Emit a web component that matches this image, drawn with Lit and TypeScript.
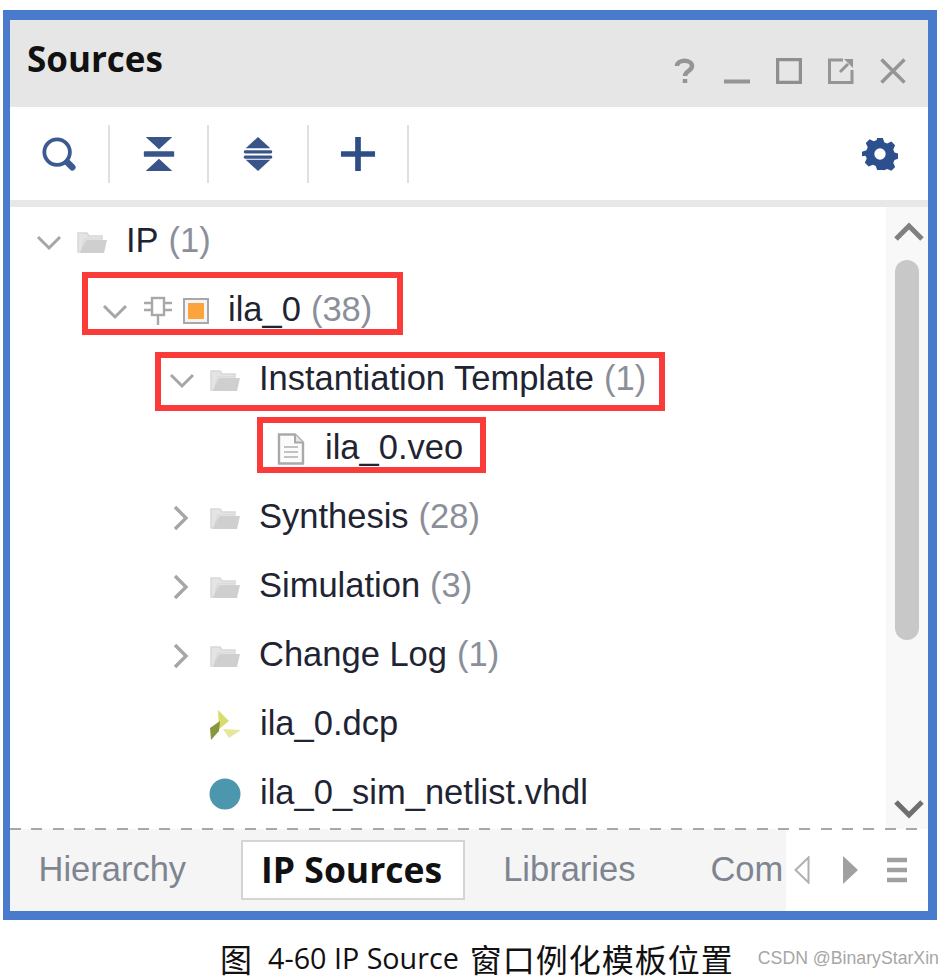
import { LitElement, html, css, svg } from 'lit';
import { customElement } from 'lit/decorators.js';

type Row = {
  indent: number;
  chevron?: 'down' | 'right';
  icon: 'folder' | 'chip' | 'file' | 'dcp' | 'dot';
  name: string;
  count?: string;
};

const ROWS: Row[] = [
  { indent: 26, chevron: 'down', icon: 'folder', name: 'IP', count: '(1)' },
  { indent: 92, chevron: 'down', icon: 'chip', name: 'ila_0', count: '(38)' },
  { indent: 159, chevron: 'down', icon: 'folder', name: 'Instantiation Template', count: '(1)' },
  { indent: 267, icon: 'file', name: 'ila_0.veo' },
  { indent: 159, chevron: 'right', icon: 'folder', name: 'Synthesis', count: '(28)' },
  { indent: 159, chevron: 'right', icon: 'folder', name: 'Simulation', count: '(3)' },
  { indent: 159, chevron: 'right', icon: 'folder', name: 'Change Log', count: '(1)' },
  { indent: 199, icon: 'dcp', name: 'ila_0.dcp' },
  { indent: 199, icon: 'dot', name: 'ila_0_sim_netlist.vhdl' },
];

const folderIcon = svg`<svg class="ic folder" viewBox="0 0 30 24">
  <path d="M1 22V3h9l2 3h13v3H8L4 22z" fill="#e4e4e4" stroke="#d8d8d8" stroke-width="1.5"/>
  <path d="M9 10h21l-3 13H3z" fill="#cfcfcf"/>
</svg>`;

const chipIcon = svg`<svg class="ic chip" viewBox="0 0 30 30">
  <rect x="9" y="2" width="12" height="17" fill="#fff" stroke="#a8a8a8" stroke-width="2.4"/>
  <path d="M1 7h8M1 14h8M21 7h8M21 14h8M15 19v10" stroke="#a8a8a8" stroke-width="2.4" fill="none"/>
</svg>
<svg class="ic square" viewBox="0 0 26 26">
  <rect x="1" y="1" width="24" height="24" fill="#f4f4f4" stroke="#a8a8a8" stroke-width="2"/>
  <rect x="5" y="5" width="16" height="16" fill="#fba43c"/>
</svg>`;

const fileIcon = svg`<svg class="ic file" viewBox="0 0 28 32">
  <path d="M2 1.500h16l8 8V30.500H2z" fill="#fbfbfb" stroke="#a9a9a9" stroke-width="2.400"/>
  <path d="M18 1.500v8h8" fill="#e6e6e6" stroke="#a9a9a9" stroke-width="2"/>
  <path d="M7 14h14M7 19h14M7 24h14" stroke="#c2c2c2" stroke-width="2"/>
</svg>`;

const dcpIcon = svg`<svg class="ic dcp" viewBox="0 0 32 32">
  <path d="M9 1l11 11-10 8z" fill="#d9dc6a"/>
  <path d="M1 19l10-7-1 10-8 9z" fill="#87973c"/>
  <path d="M14 20l18 1-12 8z" fill="#e4e89b"/>
</svg>`;

const dotIcon = svg`<svg class="ic dot" viewBox="0 0 32 32"><circle cx="16" cy="16" r="15.500" fill="#4c97ae"/></svg>`;

const ICONS = { folder: folderIcon, chip: chipIcon, file: fileIcon, dcp: dcpIcon, dot: dotIcon };

const CHEVRONS = {
  down: svg`<svg class="chev" viewBox="0 0 26 26"><path d="M2 8l11 11L24 8" fill="none" stroke="#a6a6a6" stroke-width="3"/></svg>`,
  right: svg`<svg class="chev" viewBox="0 0 26 26"><path d="M6 2l11 11L6 24" fill="none" stroke="#a6a6a6" stroke-width="3.400"/></svg>`,
};

@customElement('app-root')
export class AppRoot extends LitElement {
  static override styles = css`
    :host {
      display: block;
      position: relative;
      width: 951px;
      height: 978px;
      padding: 10px 0 0 3px;
      box-sizing: border-box;
      background: #fff;
      font-family: 'Liberation Sans', Arial, sans-serif;
      overflow: hidden;
    }
    .frame {
      width: 934px;
      height: 910px;
      box-sizing: border-box;
      border: solid #4a7acb;
      border-width: 10px 9px 9px 7px;
      display: flex;
      flex-direction: column;
    }

    .title {
      height: 87px;
      flex: none;
      background: #e6e6e6;
      display: flex;
      padding: 0 22px 0 17px;
    }
    .title h1 {
      margin: 18px 0 0;
      font: 700 35px/42px 'Open Sans', sans-serif;
      color: #111;
    }
    .win {
      margin-left: auto;
      display: flex;
      gap: 26px;
      padding-top: 38px;
    }
    .win svg { width: 26px; height: 26px; display: block; }

    .tools {
      height: 93px;
      flex: none;
      background: #fff;
      border-bottom: 7px solid #e8e8e8;
      box-sizing: content-box;
      display: flex;
      align-items: center;
      padding-right: 30px;
    }
    .tool {
      width: 97.700px;
      height: 58px;
      border-right: 2px solid #e0e0e0;
      display: flex;
      align-items: center;
      justify-content: center;
      flex: none;
    }
    .tool svg { width: 36px; height: 36px; display: block; }
    .gear { margin-left: auto; width: 36px; height: 36px; display: block; }

    .body {
      flex: 1;
      min-height: 0;
      display: flex;
    }
    .tree {
      flex: 1;
      min-width: 0;
    }
    .row {
      height: 69px;
      display: flex;
      align-items: center;
      font-size: 34.500px;
      color: #1f2433;
      white-space: nowrap;
    }
    .chev { width: 26px; height: 26px; margin-right: 15px; flex: none; display: block; }
    .ic { display: block; flex: none; }
    .folder { width: 30px; height: 24px; }
    .chip { width: 30px; height: 30px; }
    .square { width: 26px; height: 26px; margin-left: 10px; }
    .file { width: 28px; height: 32px; margin-right: 1px; }
    .dcp, .dot { width: 32px; height: 32px; }
    .name { margin-left: 19px; padding-bottom: 2px; }
    .count { margin-left: 10px; padding-bottom: 2px; color: #8b8f99; }

    .scroll {
      width: 42px;
      flex: none;
      background: #f8f8f8;
      display: flex;
      flex-direction: column;
      align-items: center;
    }
    .scroll svg { width: 30px; height: 20px; flex: none; display: block; margin-left: 3px; }
    .up { margin-top: 14px; }
    .thumb {
      width: 24px;
      height: 380px;
      margin-top: 19px;
      border-radius: 12px;
      background: #c8c8c8;
    }
    .down { margin-top: 160px; }

    .tabs {
      height: 82px;
      flex: none;
      display: flex;
      background: #fff;
      position: relative;
    }
    .tabs::before {
      content: '';
      position: absolute;
      left: 0;
      right: 11px;
      top: -1px;
      height: 2px;
      background: repeating-linear-gradient(90deg, #a8a8a8 0 11px, transparent 11px 21.330px);
    }
    .strip {
      width: 776px;
      flex: none;
      background: #f5f5f5;
      overflow: hidden;
      display: flex;
      align-items: center;
      padding: 0 0 2px 28.500px;
      box-sizing: border-box;
      font-size: 34.500px;
      color: #7f8590;
      white-space: nowrap;
    }
    .tab.active {
      flex: none;
      margin: 2px 38px 0 55px;
      width: 224px;
      height: 60px;
      box-sizing: border-box;
      border: 2px solid #d4d4d4;
      padding-right: 3px;
      background: #fff;
      color: #111;
      font: 700 35.500px/54px 'Open Sans', sans-serif;
      text-align: center;
    }
    .libs { margin-right: 75px; }
    .nav {
      flex: 1;
      display: flex;
      align-items: center;
      padding-left: 8px;
    }
    .nav svg { display: block; flex: none; }
    .next { margin-left: 33px; }
    .menu { margin-left: 28px; }

    .caption {
      height: 76px;
      display: flex;
      align-items: center;
      padding-left: 217px;
      font: 29px/36px 'Open Sans', 'Noto Sans CJK SC', sans-serif;
      color: #111;
      white-space: nowrap;
    }
    .cjk {
      font-family: 'Noto Sans CJK SC', sans-serif;
      font-size: 32px;
      line-height: 36px;
      letter-spacing: 1px;
    }
    .latin { margin: 0 11px 0 15px; font-size: 28.700px; }
    .mark {
      margin-left: 24px;
      font: 17.700px/24px 'Liberation Sans', sans-serif;
      color: #a6a6a6;
    }

    .box {
      position: absolute;
      box-sizing: border-box;
      border: 6px solid #fb3a3a;
    }
    .one { left: 82px; top: 272px; width: 321px; height: 63px; }
    .two { left: 155px; top: 352px; width: 510px; height: 59px; }
    .three { left: 257px; top: 417px; width: 229px; height: 56px; }
  `;

  private renderRow(r: Row) {
    return html`
      <div class="row" style="padding-left:${r.indent}px">
        ${r.chevron ? CHEVRONS[r.chevron] : ''}
        ${ICONS[r.icon]}
        <span class="name">${r.name}</span>
        ${r.count ? html`<span class="count">${r.count}</span>` : ''}
      </div>
    `;
  }

  override render() {
    return html`
      <div class="frame">
        <div class="title">
          <h1>Sources</h1>
          <div class="win">
            <svg viewBox="0 0 26 26"><path d="M5 8c0-7 15-7 15 0 0 5-7 5-7 10M13 21v4" fill="none" stroke="#959595" stroke-width="4.500"/></svg>
            <svg viewBox="0 0 26 26"><path d="M0 23.500h26" stroke="#959595" stroke-width="4"/></svg>
            <svg viewBox="0 0 26 26"><rect x="1.500" y="1.500" width="23" height="23" fill="none" stroke="#8f8f8f" stroke-width="3.500"/></svg>
            <svg viewBox="0 0 26 26"><path d="M15 2H1.500v22.500H24V12" fill="none" stroke="#959595" stroke-width="3"/><path d="M12 14l8-8" stroke="#959595" stroke-width="3"/><path d="M16 1h9v9z" fill="#959595"/></svg>
            <svg viewBox="0 0 26 26"><path d="M1.500 1.500l23 23M24.500 1.500l-23 23" fill="none" stroke="#959595" stroke-width="3.500"/></svg>
          </div>
        </div>

        <div class="tools">
          <div class="tool">
            <svg viewBox="0 0 38 38"><circle cx="17" cy="17" r="13.500" fill="none" stroke="#3c5a8f" stroke-width="4"/><path d="M28 28l5 5" stroke="#3c5a8f" stroke-width="7" stroke-linecap="round"/></svg>
          </div>
          <div class="tool">
            <svg viewBox="0 0 38 38"><path d="M5 1h28L19 14zM5 37h28L19 24z" fill="#385488"/><rect x="3" y="16" width="32" height="6" rx="1" fill="#385488"/></svg>
          </div>
          <div class="tool">
            <svg viewBox="0 0 38 38"><path d="M19 1l13 12H6zM19 37L6 25h26z" fill="#385488"/><rect x="4" y="15" width="30" height="3.500" rx="1.500" fill="#385488"/><rect x="4" y="20.500" width="30" height="3.500" rx="1.500" fill="#385488"/></svg>
          </div>
          <div class="tool">
            <svg viewBox="0 0 38 38"><path d="M16 1h6v15h15v6H22v15h-6V22H1v-6h15z" fill="#2f4e86"/></svg>
          </div>
          <svg class="gear" viewBox="0 0 38 38"><path fill-rule="evenodd" fill="#2c4f8d" d="M16 2h6l1.500 4.500 3 1.300 4.500-2 4 4-2 4.500 1.300 3 4.500 1.500v5l-4.500 1.500-1.300 3 2 4.500-4 4-4.500-2-3 1.300L22 36h-6l-1.500-4.400-3-1.300-4.500 2-4-4 2-4.500-1.300-3L0 21.500v-5l4.700-1.500 1.300-3-2-4.500 4-4 4.500 2 3-1.300zM19 13a6 6 0 1 0 0 12 6 6 0 0 0 0-12z"/></svg>
        </div>

        <div class="body">
          <div class="tree">${ROWS.map((r) => this.renderRow(r))}</div>
          <div class="scroll">
            <svg class="up" viewBox="0 0 30 20"><path d="M2 18L15 5l13 13" fill="none" stroke="#808080" stroke-width="5"/></svg>
            <div class="thumb"></div>
            <svg class="down" viewBox="0 0 30 20"><path d="M2 2l13 13L28 2" fill="none" stroke="#6f6f6f" stroke-width="5"/></svg>
          </div>
        </div>

        <div class="tabs">
          <div class="strip">
            <span>Hierarchy</span>
            <span class="tab active">IP Sources</span>
            <span class="libs">Libraries</span>
            <span>Com</span>
          </div>
          <div class="nav">
            <svg width="16" height="28" viewBox="0 0 16 28"><path d="M14.500 1.500v25L1.500 14z" fill="#fff" stroke="#b0b0b0" stroke-width="2"/></svg>
            <svg class="next" width="15" height="28" viewBox="0 0 15 28"><path d="M0 0l15 14L0 28z" fill="#a0a0a0"/></svg>
            <svg class="menu" width="22" height="26" viewBox="0 0 22 26"><path d="M1 3h20M1 13h20M1 23h20" stroke="#a0a0a0" stroke-width="4.500"/></svg>
          </div>
        </div>
      </div>

      <div class="caption">
        <span class="cjk">图</span>
        <span class="latin">4-60 IP Source</span>
        <span class="cjk">窗口例化模板位置</span>
        <span class="mark">CSDN @BinaryStarXin</span>
      </div>

      <div class="box one"></div>
      <div class="box two"></div>
      <div class="box three"></div>
    `;
  }
}
